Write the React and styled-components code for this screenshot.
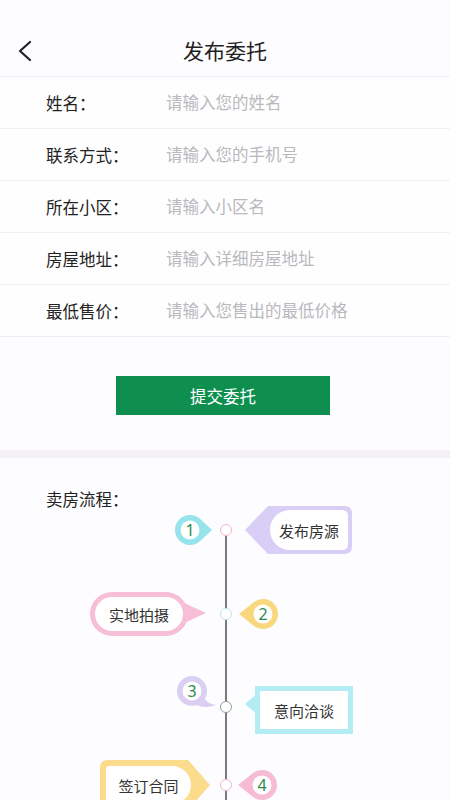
import styled, { createGlobalStyle } from 'styled-components';

const GlobalStyle = createGlobalStyle`
  html, body {
    margin: 0;
    padding: 0;
    overflow: hidden;
    background: #fdfcfe;
  }
  * {
    box-sizing: border-box;
  }
`;

const Page = styled.div`
  width: 450px;
  height: 100vh;
  overflow: hidden;
  background: #fdfcfe;
  font-family: 'Noto Sans', 'Noto Sans CJK SC', sans-serif;
  color: #222222;
`;

const Header = styled.div`
  display: flex;
  align-items: center;
  justify-content: center;
  position: relative;
  height: 77px;
  padding-top: 26px;
  border-bottom: 1px solid #efeef2;
`;

const BackBtn = styled.div`
  position: absolute;
  left: 14px;
  top: 38px;
  width: 22px;
  height: 26px;
  cursor: pointer;
`;

const Title = styled.div`
  font-size: 21px;
  line-height: 26px;
  color: #1f1f1f;
`;

const Form = styled.div`
  display: flex;
  flex-direction: column;
`;

const Row = styled.label`
  display: flex;
  align-items: center;
  height: 52px;
  padding-left: 46px;
  border-bottom: 1px solid #efeef2;
  background: #fefefe;
`;

const Label = styled.span`
  width: 120px;
  font-size: 16.5px;
  color: #222222;
  flex-shrink: 0;
`;

const Input = styled.input`
  flex: 1;
  border: none;
  outline: none;
  background: transparent;
  font-family: inherit;
  font-size: 16.5px;
  color: #333333;
  padding: 0;

  &::placeholder {
    color: #b9b9bd;
  }
`;

const BtnWrap = styled.div`
  display: flex;
  justify-content: center;
  padding: 39px 4px 35px 0;
`;

const SubmitBtn = styled.div`
  display: flex;
  align-items: center;
  justify-content: center;
  width: 214px;
  height: 39px;
  background: #0e8f50;
  color: #ffffff;
  font-size: 16.5px;
  cursor: pointer;
`;

const Band = styled.div`
  height: 8px;
  background: #f3f1f6;
`;

const Flow = styled.div`
  padding-top: 34px;
`;

const FlowTitle = styled.div`
  padding-left: 46px;
  font-size: 16.5px;
  line-height: 16px;
  color: #222222;
  margin-bottom: -2px;
`;

const Steps = styled.div`
  position: relative;
  padding-bottom: 40px;

  &::before {
    content: '';
    position: absolute;
    left: 225px;
    top: 24px;
    bottom: 0;
    width: 2px;
    background: #7a7a7c;
  }
`;

const StepRow = styled.div`
  display: grid;
  grid-template-columns: 218px 16px 1fr;
  height: 48px;
  margin-top: ${(p) => p.$mt || 0}px;
`;

const Side = styled.div`
  display: flex;
  align-items: ${(p) => (p.$top !== undefined ? 'flex-start' : 'center')};
  justify-content: ${(p) => (p.$left ? 'flex-end' : 'flex-start')};
  padding-left: ${(p) => p.$pl || 0}px;
  padding-right: ${(p) => p.$pr || 0}px;
  padding-top: ${(p) => p.$top || 0}px;
`;

const DotCell = styled.div`
  display: flex;
  align-items: center;
  justify-content: center;
  position: relative;
  z-index: 1;
`;

const Dot = styled.div`
  width: 12px;
  height: 12px;
  border-radius: 50%;
  background: #ffffff;
  border: 1.5px solid ${(p) => p.$color};
`;

const Shape = styled.div`
  position: relative;
  flex-shrink: 0;
  display: flex;
  align-items: center;
  width: ${(p) => p.$w}px;
  height: ${(p) => p.$h}px;
  margin-top: ${(p) => p.$mt || 0}px;

  & > svg {
    position: absolute;
    left: 0;
    top: 0;
  }
`;

const ShapeText = styled.span`
  position: relative;
  z-index: 1;
  display: flex;
  align-items: center;
  justify-content: center;
  margin-left: ${(p) => p.$x}px;
  width: ${(p) => p.$w}px;
  height: ${(p) => p.$h || 30}px;
  align-self: flex-start;
  font-size: ${(p) => (p.$num ? 16 : 15)}px;
  color: ${(p) => (p.$num ? '#2d8a50' : '#333333')};
`;

const NumberPin = ({ n, color, dir = 'right', w = 38 }) => {
  const tip = w - 1;
  const path = `M25.2 4 L${tip} 15 L25.2 26 A15 15 0 1 1 25.2 4 Z`;
  const mirror = dir === 'left' ? `translate(${w} 0) scale(-1 1)` : undefined;
  const cx = dir === 'left' ? w - 15 : 15;
  return (
    <Shape $w={w} $h={30}>
      <svg width={w} height={30} viewBox={`0 0 ${w} 30`}>
        <g transform={mirror}>
          <path d={path} fill={color} />
          <circle cx={15} cy={15} r={9.5} fill='#ffffff' />
        </g>
      </svg>
      <ShapeText $num $x={cx - 15} $w={30}>
        {n}
      </ShapeText>
    </Shape>
  );
};

const TalkBadge = ({ n, color, mt }) => (
  <Shape $w={40} $h={34} $mt={mt}>
    <svg width={40} height={34} viewBox='0 0 40 34'>
      <circle cx={15} cy={15} r={15} fill={color} />
      <path d='M27 22 Q31 28 39 29 Q29 33 19 29 Z' fill={color} />
      <circle cx={15} cy={15} r={9.5} fill='#ffffff' />
    </svg>
    <ShapeText $num $x={0} $w={30}>
      {n}
    </ShapeText>
  </Shape>
);

const ArrowTag = ({ text, color }) => (
  <Shape $w={107} $h={48}>
    <svg width={107} height={48} viewBox='0 0 107 48'>
      <path d='M0 24 L23 0 H99 Q107 0 107 8 V40 Q107 48 99 48 H23 Z' fill={color} />
      <path
        d='M45 4 H97 Q103 4 103 10 V38 Q103 44 97 44 H45 A20 20 0 0 1 25 24 A20 20 0 0 1 45 4 Z'
        fill='#ffffff'
      />
    </svg>
    <ShapeText $x={25} $w={78} $h={48}>
      {text}
    </ShapeText>
  </Shape>
);

const PillTag = ({ text, color }) => (
  <Shape $w={116} $h={44}>
    <svg width={116} height={44} viewBox='0 0 116 44'>
      <rect x={0} y={0} width={98} height={44} rx={22} fill={color} />
      <path d='M92 10 L116 21 L92 32 Z' fill={color} />
      <rect x={5} y={5} width={88} height={34} rx={17} fill='#ffffff' />
    </svg>
    <ShapeText $x={5} $w={88} $h={44}>
      {text}
    </ShapeText>
  </Shape>
);

const NotchTag = ({ text, color, mt }) => (
  <Shape $w={108} $h={48} $mt={mt}>
    <svg width={108} height={48} viewBox='0 0 108 48'>
      <rect x={10} y={0} width={98} height={48} fill={color} />
      <path d='M0 18 L12 8 L12 28 Z' fill={color} />
      <rect x={15} y={5} width={88} height={38} fill='#ffffff' />
    </svg>
    <ShapeText $x={15} $w={88} $h={48}>
      {text}
    </ShapeText>
  </Shape>
);

const FlagTag = ({ text, color }) => (
  <Shape $w={110} $h={50}>
    <svg width={110} height={50} viewBox='0 0 110 50'>
      <path d='M8 0 H88 L110 25 L88 50 H8 Q0 50 0 42 V8 Q0 0 8 0 Z' fill={color} />
      <path d='M9 6 H72 A19 19 0 0 1 72 44 H9 Q6 44 6 41 V9 Q6 6 9 6 Z' fill='#ffffff' />
    </svg>
    <ShapeText $x={6} $w={85} $h={50}>
      {text}
    </ShapeText>
  </Shape>
);

const fields = [
  { label: '姓名：', placeholder: '请输入您的姓名' },
  { label: '联系方式：', placeholder: '请输入您的手机号' },
  { label: '所在小区：', placeholder: '请输入小区名' },
  { label: '房屋地址：', placeholder: '请输入详细房屋地址' },
  { label: '最低售价：', placeholder: '请输入您售出的最低价格' },
];

const App = () => {
  return (
    <Page>
      <GlobalStyle />
      <Header>
        <BackBtn>
          <svg width='22' height='26' viewBox='0 0 22 26'>
            <polyline
              points='16,4 6,13 16,22'
              fill='none'
              stroke='#222222'
              strokeWidth='2.2'
              strokeLinecap='round'
              strokeLinejoin='round'
            />
          </svg>
        </BackBtn>
        <Title>发布委托</Title>
      </Header>

      <Form>
        {fields.map((f) => (
          <Row key={f.label}>
            <Label>{f.label}</Label>
            <Input placeholder={f.placeholder} />
          </Row>
        ))}
      </Form>

      <BtnWrap>
        <SubmitBtn>提交委托</SubmitBtn>
      </BtnWrap>

      <Band />

      <Flow>
        <FlowTitle>卖房流程：</FlowTitle>
        <Steps>
          <StepRow>
            <Side $left $pr={5}>
              <NumberPin n='1' color='#97e3ec' />
            </Side>
            <DotCell>
              <Dot $color='#f3b6cb' />
            </DotCell>
            <Side $pl={11}>
              <ArrowTag text='发布房源' color='#d8cef6' />
            </Side>
          </StepRow>

          <StepRow $mt={36}>
            <Side $left $pr={12}>
              <PillTag text='实地拍摄' color='#f7bfd7' />
            </Side>
            <DotCell>
              <Dot $color='#bfe3ee' />
            </DotCell>
            <Side $pl={4}>
              <NumberPin n='2' color='#f9d77d' dir='left' w={40} />
            </Side>
          </StepRow>

          <StepRow $mt={42}>
            <Side $left $pr={1} $top={0}>
              <TalkBadge n='3' color='#dacff2' mt={-4} />
            </Side>
            <DotCell>
              <Dot $color='#8aa596' />
            </DotCell>
            <Side $pl={11} $top={0}>
              <NotchTag text='意向洽谈' color='#b4ecf4' mt={6} />
            </Side>
          </StepRow>

          <StepRow $mt={32}>
            <Side $left $pr={8}>
              <FlagTag text='签订合同' color='#fbdc8d' />
            </Side>
            <DotCell>
              <Dot $color='#f2b9d0' />
            </DotCell>
            <Side $pl={3}>
              <NumberPin n='4' color='#f6bbd5' dir='left' w={40} />
            </Side>
          </StepRow>
        </Steps>
      </Flow>
    </Page>
  );
};

export default App;
